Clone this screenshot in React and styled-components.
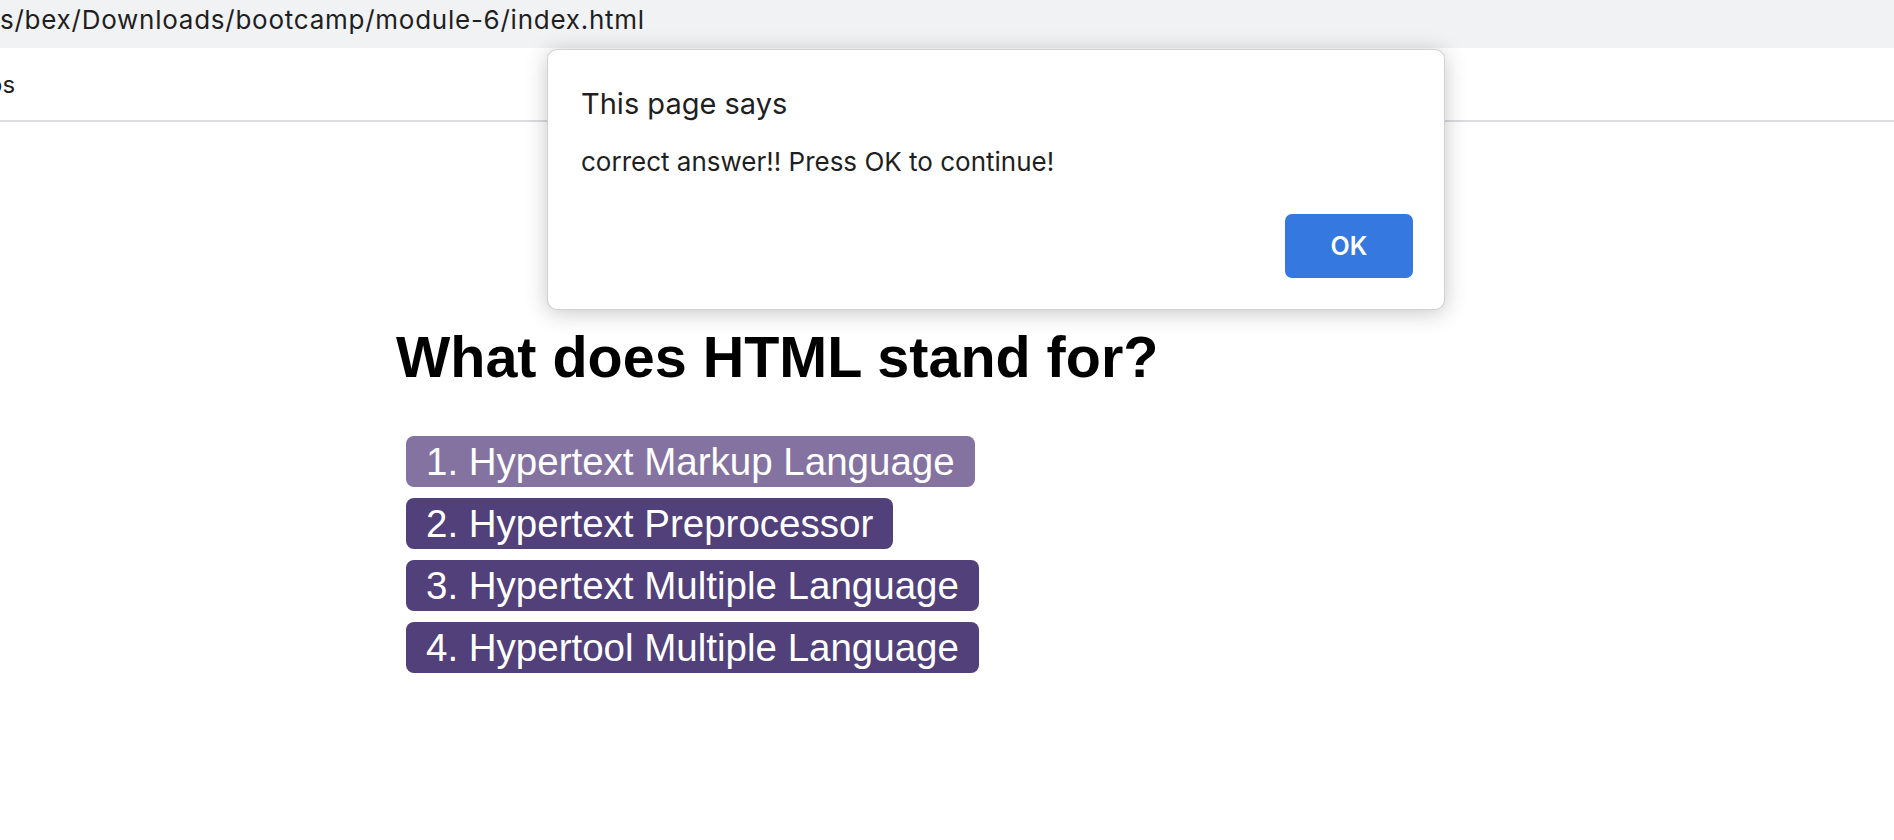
import React, { useState } from "react";
import styled, { createGlobalStyle } from "styled-components";

const GlobalStyle = createGlobalStyle`
  html, body {
    margin: 0;
    padding: 0;
    background: #ffffff;
  }
  body {
    font-family: "Liberation Sans", Arial, sans-serif;
  }
`;

const Frame = styled.div`
  position: relative;
  width: 1894px;
  height: 840px;
  overflow: hidden;
  background: #ffffff;
`;

// browser chrome
const AddressBar = styled.div`
  height: 48px;
  box-sizing: border-box;
  padding-top: 7px;
  background: #f1f2f4;
  color: #1f1f1f;
  font-family: Inter, "Noto Sans", sans-serif;
  font-size: 26px;
  line-height: 25px;
  letter-spacing: 0.75px;
  white-space: nowrap;
`;

const BookmarksBar = styled.div`
  height: 72px;
  border-bottom: 2px solid #dadce0;
  display: flex;
  align-items: center;
  overflow: hidden;
  font-family: Inter, "Noto Sans", sans-serif;
  font-size: 24px;
  color: #1f1f1f;
`;

const Bookmark = styled.span`
  margin-left: ${(p) => p.$shift || 0}px;
  white-space: nowrap;
`;

// page
const Page = styled.main`
  padding: 202px 0 0 396px;
`;

const Question = styled.h1`
  margin: 0 0 46px;
  font-size: 57.5px;
  line-height: 66px;
  font-weight: 700;
  color: #000000;
`;

const Choices = styled.div`
  display: flex;
  flex-direction: column;
  align-items: flex-start;
  gap: 11px;
  padding-left: 10px;
`;

const Choice = styled.button`
  border: none;
  border-radius: 8px;
  padding: 0 20px;
  height: 51px;
  line-height: 51px;
  font-family: "Liberation Sans", Arial, sans-serif;
  font-size: 38.5px;
  color: #ffffff;
  background: ${(p) => (p.$hover ? "#8473a0" : "#514079")};
  cursor: pointer;
`;

// alert dialog
const Dialog = styled.div`
  position: absolute;
  left: 547px;
  top: 49px;
  width: 898px;
  height: 261px;
  box-sizing: border-box;
  padding: 36px 31px 0 33px;
  background: #ffffff;
  border: 1px solid rgba(0, 0, 0, 0.18);
  border-radius: 10px;
  box-shadow: 0 3px 22px rgba(0, 0, 0, 0.22);
  font-family: Inter, "Noto Sans", sans-serif;
  color: #1f1f1f;
  display: flex;
  flex-direction: column;
`;

const DialogTitle = styled.div`
  font-size: 29px;
  line-height: 36px;
`;

const DialogText = styled.div`
  margin-top: 24px;
  font-size: 26px;
  line-height: 32px;
`;

const DialogActions = styled.div`
  margin-top: 36px;
  display: flex;
  justify-content: flex-end;
`;

const OkButton = styled.button`
  width: 128px;
  height: 64px;
  border: none;
  border-radius: 7px;
  background: #3578e0;
  color: #ffffff;
  font-family: Inter, "Noto Sans", sans-serif;
  font-size: 25px;
  font-weight: 600;
  cursor: pointer;
`;

const answers = [
  "1. Hypertext Markup Language",
  "2. Hypertext Preprocessor",
  "3. Hypertext Multiple Language",
  "4. Hypertool Multiple Language",
];

export default function App() {
  const [open, setOpen] = useState(true);

  return (
    <Frame>
      <GlobalStyle />
      <AddressBar>s/bex/Downloads/bootcamp/module-6/index.html</AddressBar>
      <BookmarksBar>
        <Bookmark $shift={-12}>os</Bookmark>
      </BookmarksBar>

      <Page>
        <Question>What does HTML stand for?</Question>
        <Choices>
          {answers.map((a, i) => (
            <Choice key={a} $hover={i === 0}>
              {a}
            </Choice>
          ))}
        </Choices>
      </Page>

      {open && (
        <Dialog>
          <DialogTitle>This page says</DialogTitle>
          <DialogText>correct answer!! Press OK to continue!</DialogText>
          <DialogActions>
            <OkButton onClick={() => setOpen(false)}>OK</OkButton>
          </DialogActions>
        </Dialog>
      )}
    </Frame>
  );
}
